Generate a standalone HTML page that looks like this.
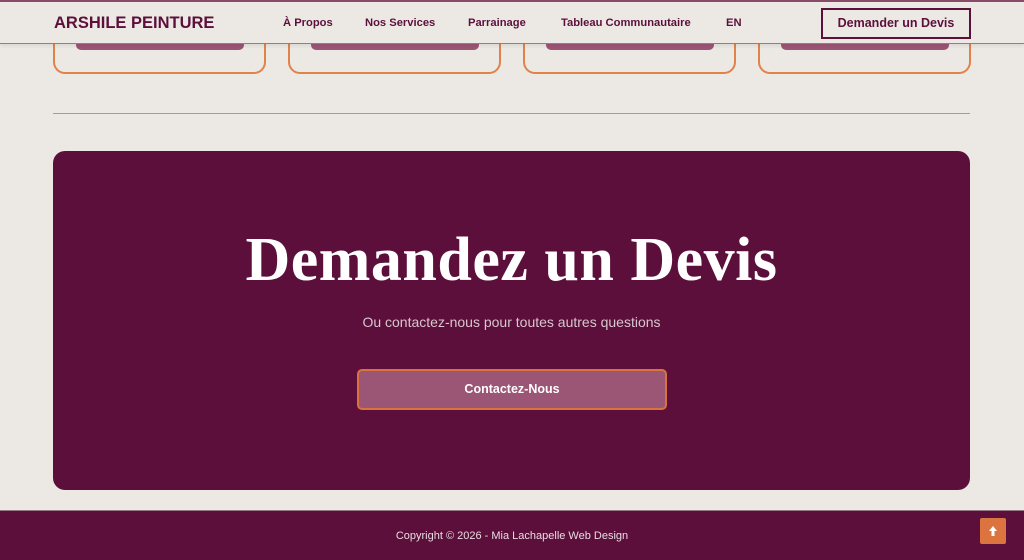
<!DOCTYPE html>
<html><head><meta charset="utf-8"><style>
*{margin:0;padding:0;box-sizing:border-box}
body{width:1024px;height:560px;overflow:hidden;background:#ECE9E4;font-family:"Liberation Sans",sans-serif;position:relative}
.hdr{position:absolute;left:0;top:0;width:1024px;height:44px;background:#ECE9E4;border-top:2px solid #8a4a6a;border-bottom:1px solid #9a7a8a;z-index:5;box-shadow:0 2px 4px rgba(0,0,0,.08)}
.logo{position:absolute;left:54px;top:12px;font-size:16.5px;font-weight:bold;color:#5C0F3B}
.nav a{position:absolute;top:15px;font-size:11.2px;font-weight:bold;color:#5C0F3B;text-decoration:none}
.cta{position:absolute;left:821px;top:6px;width:150px;height:31px;border:2px solid #5C0F3B;color:#5C0F3B;font-size:12.5px;font-weight:bold;text-align:center;line-height:27px}
.card{position:absolute;top:20px;width:213px;height:54px;border:2px solid #E0824A;border-top:none;border-radius:0 0 12px 12px}
.bar{position:absolute;left:21px;top:0;width:168px;height:30px;background:#9B5575;border-radius:0 0 5px 5px}
.hr{position:absolute;left:53px;top:113px;width:917px;height:0;border-top:1px solid #E08A55}
.panel{position:absolute;left:53px;top:151px;width:917px;height:339px;background:#5C0F3B;border-radius:12px;text-align:center;color:#fff}
.panel h1{position:absolute;left:0;right:0;top:74px;font-family:"Liberation Serif",serif;font-size:62px;font-weight:bold;letter-spacing:.5px}
.panel p{position:absolute;left:0;right:0;top:163px;font-size:14px;color:#d9c6cf}
.btn{position:absolute;left:304px;top:218px;width:310px;height:41px;background:#9B5575;border:2px solid #D9723E;border-radius:5px;font-size:12.5px;font-weight:bold;line-height:37px}
.foot{position:absolute;left:0;top:510px;width:1024px;height:50px;background:#5C0F3B;border-top:1px solid #9a7a8a}
.foot p{position:absolute;left:0;width:1024px;text-align:center;top:19px;font-size:11px;color:#e8dde2}
.top{position:absolute;left:980px;top:7px;width:26px;height:26px;background:#DC7440;border-radius:2px}
</style></head><body>
<div class="hdr">
<div class="logo">ARSHILE PEINTURE</div>
<div class="nav">
<a style="left:283px">À Propos</a>
<a style="left:365px">Nos Services</a>
<a style="left:468px">Parrainage</a>
<a style="left:561px">Tableau Communautaire</a>
<a style="left:726px">EN</a>
</div>
<div class="cta">Demander un Devis</div>
</div>
<div class="card" style="left:53px"><div class="bar"></div></div>
<div class="card" style="left:288px"><div class="bar"></div></div>
<div class="card" style="left:523px"><div class="bar"></div></div>
<div class="card" style="left:758px"><div class="bar"></div></div>
<div class="hr"></div>
<div class="panel">
<h1>Demandez un Devis</h1>
<p>Ou contactez-nous pour toutes autres questions</p>
<div class="btn">Contactez-Nous</div>
</div>
<div class="foot"><p>Copyright © 2026 - Mia Lachapelle Web Design</p>
<div class="top"><svg width="26" height="26" viewBox="0 0 26 26"><path d="M13 8 L9 13 H11.5 V18 H14.5 V13 H17 Z" fill="#fff"/></svg></div></div>
</body></html>
